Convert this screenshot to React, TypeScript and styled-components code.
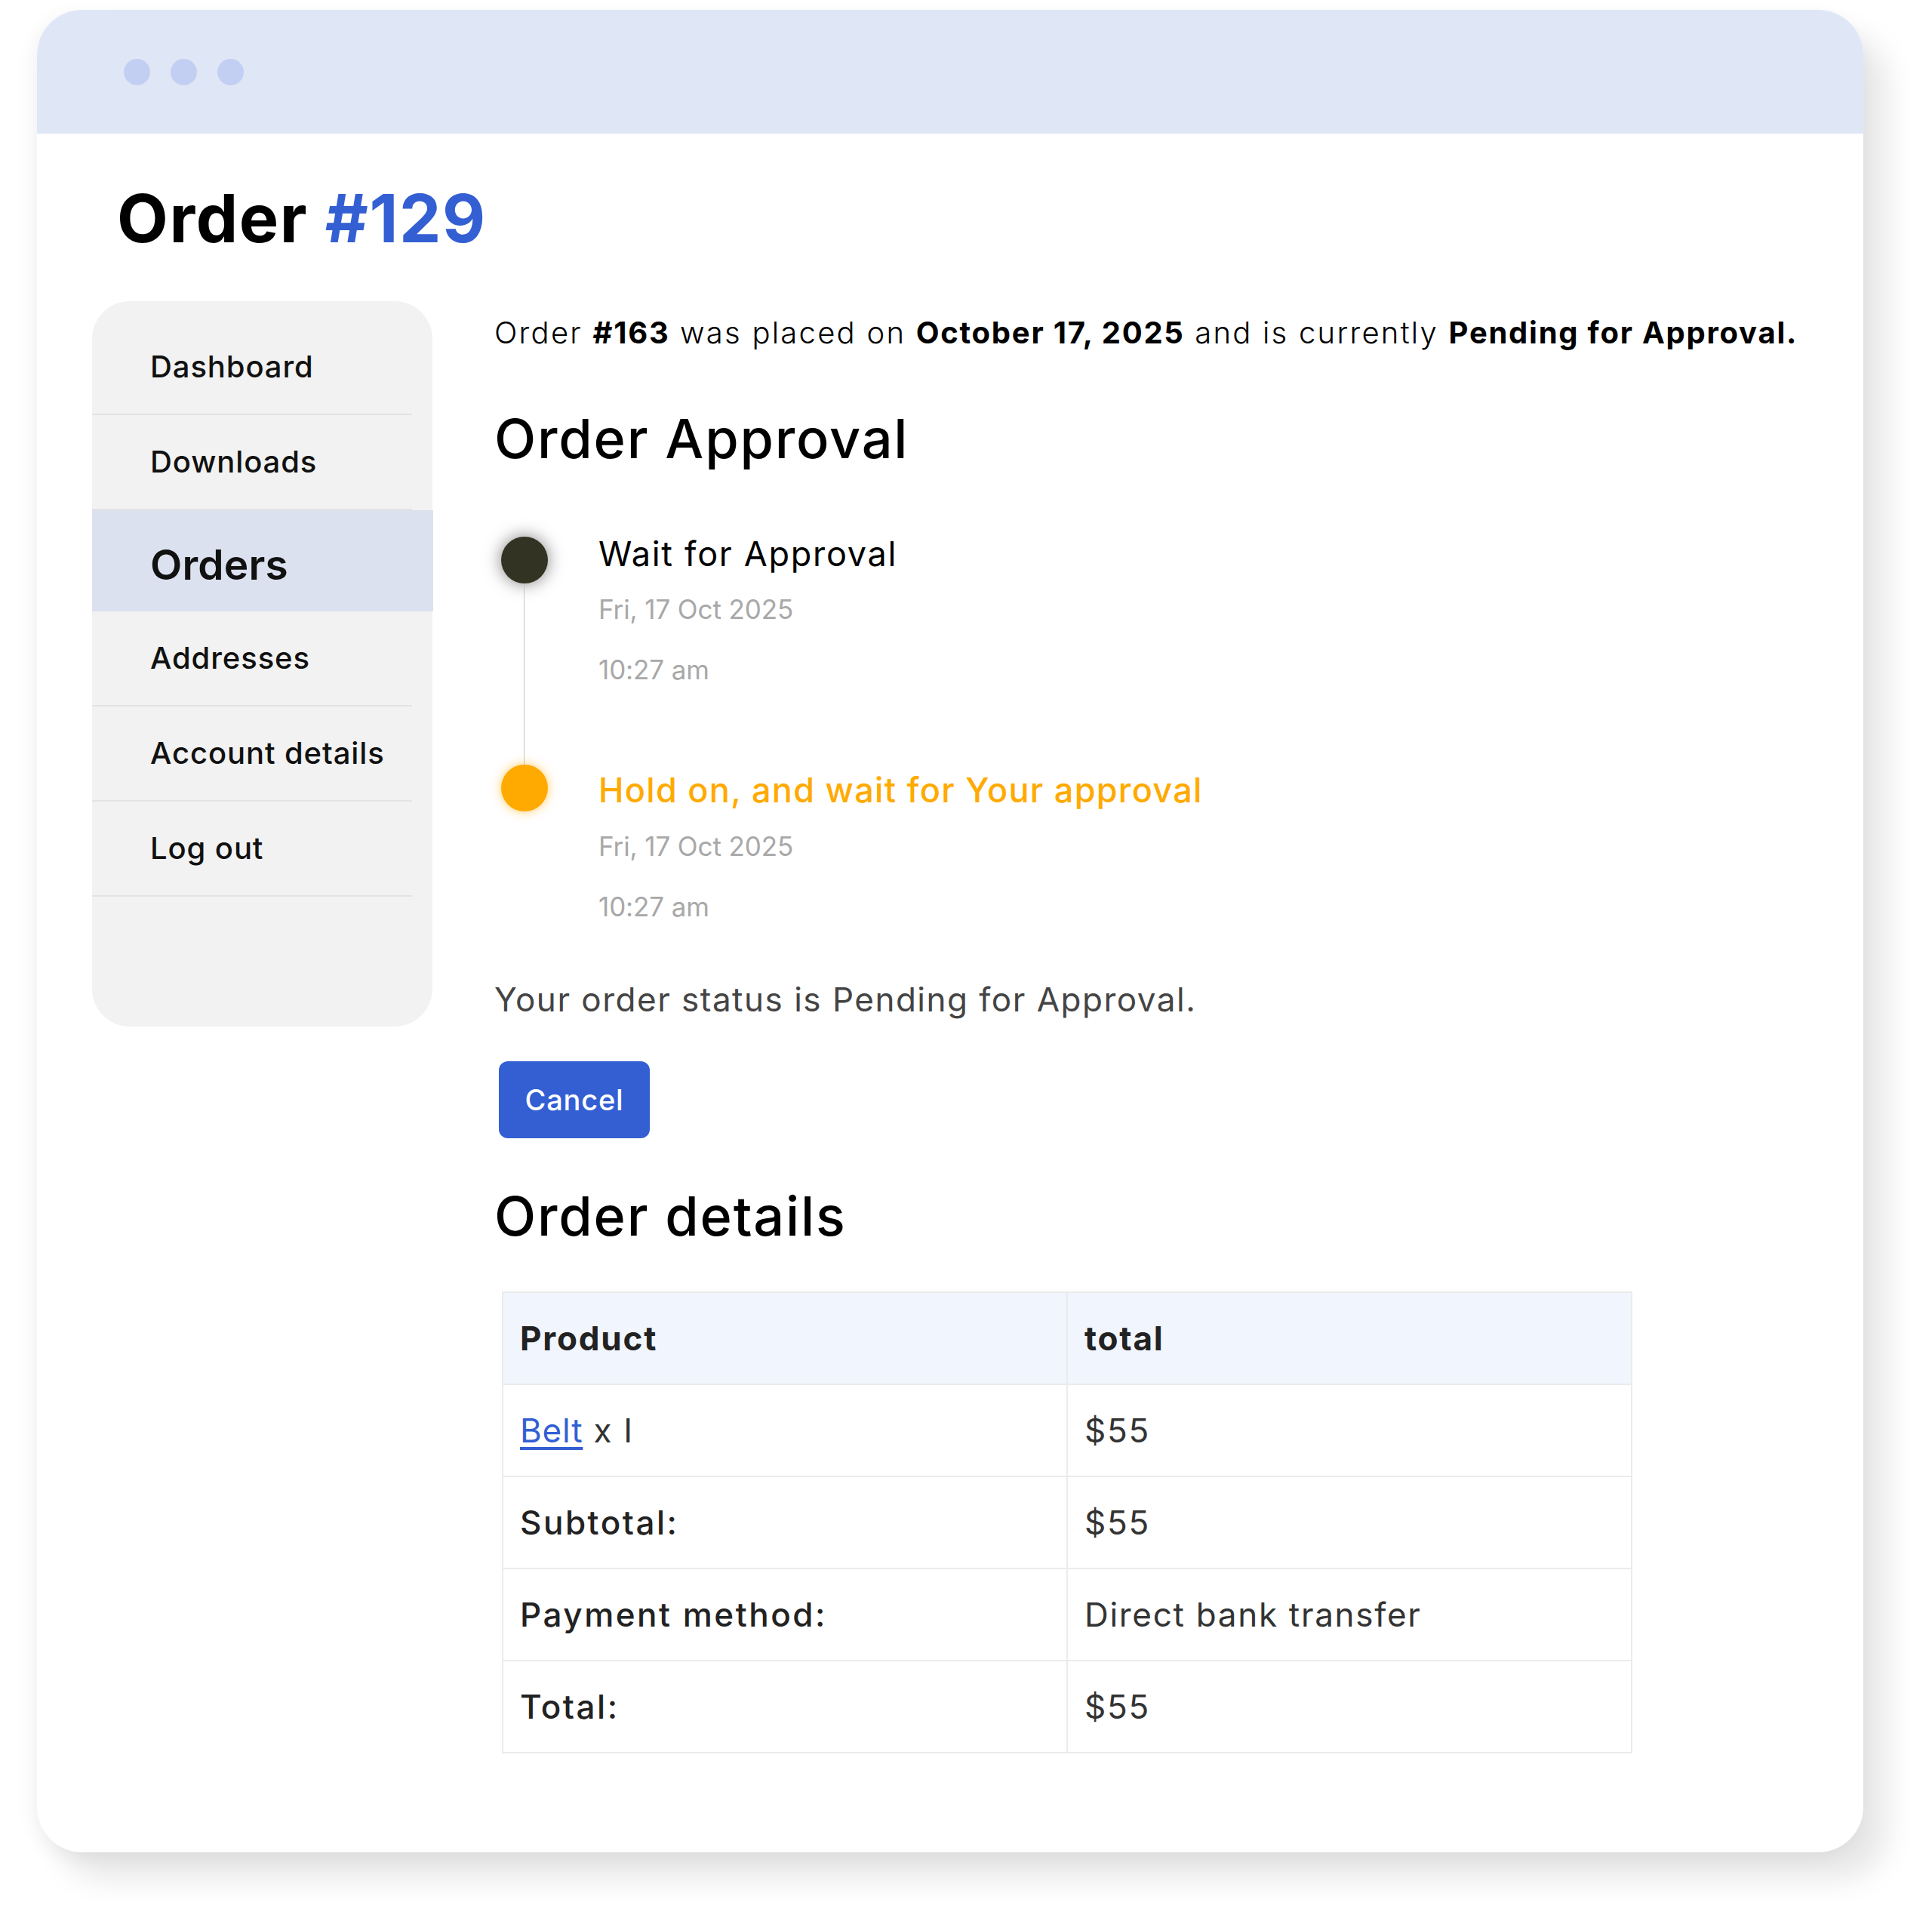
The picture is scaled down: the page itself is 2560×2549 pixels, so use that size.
import React from "react";
import styled, { createGlobalStyle } from "styled-components";

const GlobalStyle = createGlobalStyle`
  body {
    margin: 0;
    background: #ffffff;
    font-family: Inter, "Liberation Sans", sans-serif;
    color: #000;
  }
`;

const Page = styled.div`
  box-sizing: border-box;
  min-height: 2549px;
  padding: 13px 0 95px 49px;
`;

const Window = styled.div`
  width: 2420px;
  height: 2441px;
  border-radius: 60px;
  background: #ffffff;
  overflow: hidden;
  box-shadow: 30px 34px 40px rgba(0, 0, 0, 0.1), -6px 6px 24px rgba(0, 0, 0, 0.05);
`;

const TitleBar = styled.div`
  height: 164px;
  background: #dfe7f6;
  display: flex;
  align-items: center;
  gap: 27px;
  padding-left: 115px;
`;

const Dot = styled.span`
  width: 35px;
  height: 35px;
  border-radius: 50%;
  background: #c2cff2;
`;

const Body = styled.div`
  padding: 0 0 0 73px;
`;

const PageTitle = styled.h1`
  margin: 68px 0 66px 33px;
  font-size: 88px;
  line-height: 1;
  font-weight: 700;
  letter-spacing: 1.6px;
`;

const Accent = styled.span`
  color: #335fd3;
`;

const Layout = styled.div`
  display: grid;
  grid-template-columns: 451px 1fr;
  column-gap: 82px;
  align-items: start;
`;

const Sidebar = styled.nav`
  height: 961px;
  box-sizing: border-box;
  padding-top: 25px;
  background: #f2f2f2;
  border-radius: 50px;
  display: flex;
  flex-direction: column;
`;

const NavItem = styled.a<{ $active?: boolean }>`
  display: flex;
  align-items: center;
  box-sizing: border-box;
  height: ${(p) => (p.$active ? "134px" : "126px")};
  width: ${(p) => (p.$active ? "452px" : "424px")};
  padding: ${(p) => (p.$active ? "12px 0 0 77px" : "0 0 0 77px")};
  border-bottom: 2px solid ${(p) => (p.$active ? "transparent" : "#e3e3e3")};
  background: ${(p) => (p.$active ? "#dbe1ef" : "transparent")};
  font-size: ${(p) => (p.$active ? "55px" : "40px")};
  font-weight: ${(p) => (p.$active ? 600 : 500)};
  letter-spacing: ${(p) => (p.$active ? "0.2px" : "0.9px")};
  line-height: 1;
  color: #111;
  text-decoration: none;
`;

const Content = styled.main`
  display: flex;
  flex-direction: column;
  align-items: flex-start;
`;

const Intro = styled.p`
  margin: 22px 0 0;
  font-size: 40px;
  line-height: 1;
  font-weight: 300;
  letter-spacing: 2.25px;
  white-space: nowrap;

  b {
    font-weight: 700;
    letter-spacing: 1.75px;
  }
`;

const SectionTitle = styled.h2<{ $top: number }>`
  margin: ${(p) => p.$top}px 0 0;
  font-size: 72px;
  line-height: 1;
  font-weight: 500;
  letter-spacing: 1.8px;
`;

const Timeline = styled.div`
  margin-top: 94px;
  display: flex;
  flex-direction: column;
`;

const Step = styled.div<{ $last?: boolean }>`
  display: grid;
  grid-template-columns: 80px 1fr;
  column-gap: 49px;
  padding-left: 9px;
  padding-bottom: ${(p) => (p.$last ? "0" : "86px")};
`;

const Marker = styled.div<{ $last?: boolean }>`
  display: flex;
  flex-direction: column;
  align-items: flex-start;
  margin-bottom: ${(p) => (p.$last ? "0" : "-86px")};
`;

const Bullet = styled.span<{ $tone: "dark" | "amber" }>`
  flex: none;
  width: 62px;
  height: 62px;
  border-radius: 50%;
  background: ${(p) => (p.$tone === "dark" ? "#333323" : "#ffaa00")};
  box-shadow: ${(p) =>
    p.$tone === "dark"
      ? "0 0 22px rgba(0, 0, 0, 0.5)"
      : "0 0 14px rgba(255, 170, 0, 0.6)"};
`;

const Connector = styled.span`
  flex: 1;
  width: 1px;
  margin-left: 30px;
  background: #c4c4c4;
`;

const StepText = styled.div`
  display: flex;
  flex-direction: column;
`;

const StepTitle = styled.div<{ $tone: "dark" | "amber"; $top: number }>`
  margin-top: ${(p) => p.$top}px;
  font-size: 45px;
  line-height: 1;
  font-weight: ${(p) => (p.$tone === "dark" ? 400 : 500)};
  letter-spacing: ${(p) => (p.$tone === "dark" ? "1.7px" : "1.3px")};
  color: ${(p) => (p.$tone === "dark" ? "#000" : "#ffaa00")};
  white-space: nowrap;
`;

const StepMeta = styled.div<{ $top?: number }>`
  margin-top: ${(p) => p.$top ?? 0}px;
  font-size: 35px;
  line-height: 80px;
  color: #a8a8a8;
  font-weight: 400;
  letter-spacing: -0.1px;
`;

const StatusLine = styled.p`
  margin: 61px 0 0;
  font-size: 44px;
  line-height: 1;
  color: #444;
  font-weight: 400;
  letter-spacing: 1.5px;
`;

const CancelButton = styled.button`
  margin: 60px 0 0 6px;
  width: 200px;
  height: 102px;
  border: none;
  border-radius: 12px;
  background: #335fd3;
  color: #fff;
  font-family: inherit;
  font-size: 38px;
  font-weight: 500;
  letter-spacing: 0.8px;
`;

const DetailsTable = styled.table`
  margin: 64px 0 0 10px;
  width: 1498px;
  border-collapse: collapse;
  table-layout: fixed;
  font-size: 44px;
  color: #222;
`;

const HeadCell = styled.th`
  height: 122px;
  box-sizing: border-box;
  padding: 0 0 0 22px;
  text-align: left;
  font-weight: 700;
  letter-spacing: 1.8px;
  background: #f1f5fd;
  border: 2px solid #ebebeb;
`;

const Cell = styled.td<{ $label?: boolean }>`
  height: 122px;
  box-sizing: border-box;
  padding: 0 0 0 22px;
  font-weight: ${(p) => (p.$label ? 500 : 400)};
  letter-spacing: ${(p) => (p.$label ? "2.5px" : "1.7px")};
  color: ${(p) => (p.$label ? "#222" : "#333")};
  border: 2px solid #ebebeb;
`;

const ProductLink = styled.a`
  color: #335fd3;
  text-decoration: underline;
  text-underline-offset: 6px;
  letter-spacing: 0.8px;
`;

const navItems = ["Dashboard", "Downloads", "Orders", "Addresses", "Account details", "Log out"];

const totals = [
  { label: "Subtotal:", value: "$55" },
  { label: "Payment method:", value: "Direct bank transfer" },
  { label: "Total:", value: "$55" },
];

const App = () => {
  return (
    <>
      <GlobalStyle />
      <Page>
        <Window>
          <TitleBar>
            <Dot />
            <Dot />
            <Dot />
          </TitleBar>
          <Body>
            <PageTitle>
              Order <Accent>#129</Accent>
            </PageTitle>
            <Layout>
              <Sidebar>
                {navItems.map((item) => (
                  <NavItem key={item} $active={item === "Orders"}>
                    {item}
                  </NavItem>
                ))}
              </Sidebar>
              <Content>
                <Intro>
                  Order <b>#163</b> was placed on <b>October 17, 2025</b> and is currently{" "}
                  <b>Pending for Approval.</b>
                </Intro>
                <SectionTitle $top={84}>Order Approval</SectionTitle>
                <Timeline>
                  <Step>
                    <Marker>
                      <Bullet $tone="dark" />
                      <Connector />
                    </Marker>
                    <StepText>
                      <StepTitle $tone="dark" $top={0}>
                        Wait for Approval
                      </StepTitle>
                      <StepMeta $top={11}>Fri, 17 Oct 2025</StepMeta>
                      <StepMeta>10:27 am</StepMeta>
                    </StepText>
                  </Step>
                  <Step $last>
                    <Marker $last>
                      <Bullet $tone="amber" />
                    </Marker>
                    <StepText>
                      <StepTitle $tone="amber" $top={11}>
                        Hold on, and wait for Your approval
                      </StepTitle>
                      <StepMeta $top={12}>Fri, 17 Oct 2025</StepMeta>
                      <StepMeta>10:27 am</StepMeta>
                    </StepText>
                  </Step>
                </Timeline>
                <StatusLine>Your order status is Pending for Approval.</StatusLine>
                <CancelButton>Cancel</CancelButton>
                <SectionTitle $top={67}>Order details</SectionTitle>
                <DetailsTable>
                  <thead>
                    <tr>
                      <HeadCell>Product</HeadCell>
                      <HeadCell>total</HeadCell>
                    </tr>
                  </thead>
                  <tbody>
                    <tr>
                      <Cell>
                        <ProductLink href="#">Belt</ProductLink> x I
                      </Cell>
                      <Cell>$55</Cell>
                    </tr>
                    {totals.map((row) => (
                      <tr key={row.label}>
                        <Cell $label>{row.label}</Cell>
                        <Cell>{row.value}</Cell>
                      </tr>
                    ))}
                  </tbody>
                </DetailsTable>
              </Content>
            </Layout>
          </Body>
        </Window>
      </Page>
    </>
  );
};

export default App;
